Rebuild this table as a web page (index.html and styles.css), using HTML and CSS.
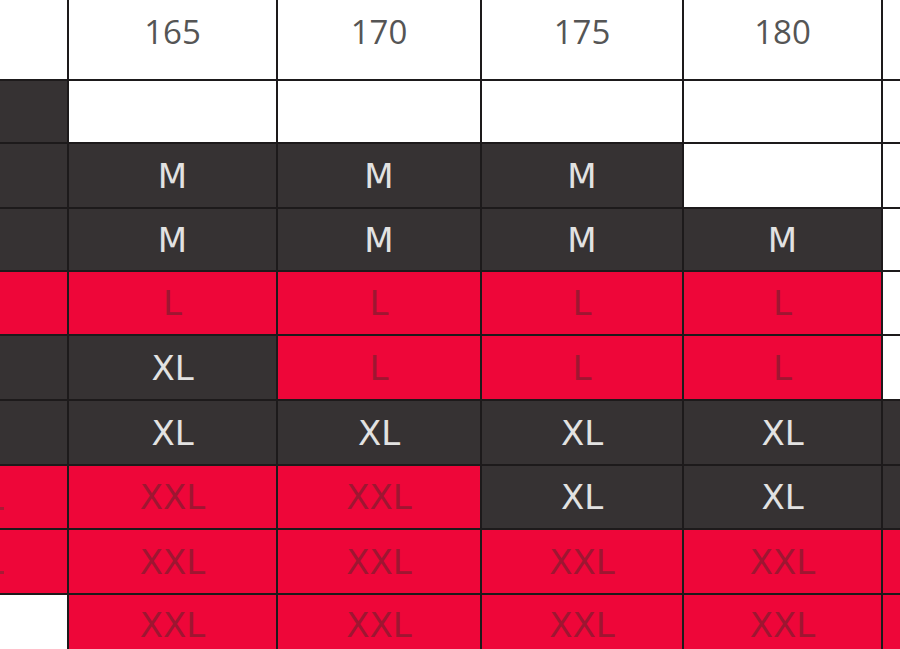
FILE: index.html
```html
<!DOCTYPE html>
<html lang="en">
<head>
<meta charset="utf-8">
<title>Size chart</title>
<link rel="stylesheet" href="styles.css">
</head>
<body>
<div class="chart">
  <div class="cell w"></div>
  <div class="cell w head">165</div>
  <div class="cell w head">170</div>
  <div class="cell w head">175</div>
  <div class="cell w head">180</div>
  <div class="cell w"></div>

  <div class="cell d"></div>
  <div class="cell w"></div>
  <div class="cell w"></div>
  <div class="cell w"></div>
  <div class="cell w"></div>
  <div class="cell w"></div>

  <div class="cell d"></div>
  <div class="cell d">M</div>
  <div class="cell d">M</div>
  <div class="cell d">M</div>
  <div class="cell w"></div>
  <div class="cell w"></div>

  <div class="cell d"></div>
  <div class="cell d">M</div>
  <div class="cell d">M</div>
  <div class="cell d">M</div>
  <div class="cell d">M</div>
  <div class="cell w"></div>

  <div class="cell r"></div>
  <div class="cell r">L</div>
  <div class="cell r">L</div>
  <div class="cell r">L</div>
  <div class="cell r">L</div>
  <div class="cell w"></div>

  <div class="cell d"></div>
  <div class="cell d">XL</div>
  <div class="cell r">L</div>
  <div class="cell r">L</div>
  <div class="cell r">L</div>
  <div class="cell w"></div>

  <div class="cell d"></div>
  <div class="cell d">XL</div>
  <div class="cell d">XL</div>
  <div class="cell d">XL</div>
  <div class="cell d">XL</div>
  <div class="cell d"></div>

  <div class="cell r frag"><span class="tail"></span></div>
  <div class="cell r">XXL</div>
  <div class="cell r">XXL</div>
  <div class="cell d">XL</div>
  <div class="cell d">XL</div>
  <div class="cell d"></div>

  <div class="cell r frag"><span class="tail"></span></div>
  <div class="cell r">XXL</div>
  <div class="cell r">XXL</div>
  <div class="cell r">XXL</div>
  <div class="cell r">XXL</div>
  <div class="cell r"></div>

  <div class="cell w"></div>
  <div class="cell r">XXL</div>
  <div class="cell r">XXL</div>
  <div class="cell r">XXL</div>
  <div class="cell r">XXL</div>
  <div class="cell r"></div>
</div>
</body>
</html>
```
FILE: styles.css
```css
html, body {
  margin: 0;
  padding: 0;
  width: 900px;
  height: 649px;
  overflow: hidden;
  background: #ffffff;
}

.chart {
  display: grid;
  grid-template-columns: 67px 207px 202px 200px 197px 40px;
  grid-template-rows: 79px 61px 63px 61px 62px 63px 63px 62px 63px 60px;
  gap: 2px;
  background: #1d1a1b;
  width: 925px;
  height: 660px;
}

.cell {
  display: flex;
  align-items: center;
  justify-content: center;
  overflow: hidden;
  font-family: "DejaVu Sans", sans-serif;
  font-weight: 400;
  font-size: 34px;
  line-height: 1;
  white-space: nowrap;
}

.w {
  background: #ffffff;
}

.d {
  background: #363233;
  color: #e2e2e2;
}

.r {
  background: #ee0639;
  color: #9e1631;
}

.head {
  align-items: flex-start;
  padding-top: 15px;
  box-sizing: border-box;
  font-family: "Open Sans", "Liberation Sans", sans-serif;
  font-weight: 400;
  font-size: 33px;
  color: #555555;
}

.frag {
  justify-content: flex-start;
}

.tail {
  display: block;
  width: 4px;
  height: 3px;
  margin-top: 22px;
  background: #a81a35;
}
```
